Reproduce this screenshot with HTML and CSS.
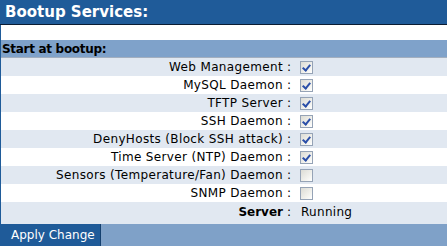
FILE: index.html
```html
<!DOCTYPE html>
<html>
<head>
<meta charset="utf-8">
<link rel="stylesheet" href="styles.css">
</head>
<body>
<div class="page">
  <div class="title">Bootup Services:</div>
  <div class="panel">
    <div class="spacer"></div>
    <div class="section">Start at bootup:</div>
    <div class="rows">
      <div class="row alt"><span class="label">Web Management</span><span class="colon">:</span><span class="cb on"></span></div>
      <div class="row"><span class="label">MySQL Daemon</span><span class="colon">:</span><span class="cb on"></span></div>
      <div class="row alt"><span class="label">TFTP Server</span><span class="colon">:</span><span class="cb on"></span></div>
      <div class="row"><span class="label">SSH Daemon</span><span class="colon">:</span><span class="cb on"></span></div>
      <div class="row alt"><span class="label">DenyHosts (Block SSH attack)</span><span class="colon">:</span><span class="cb on"></span></div>
      <div class="row"><span class="label">Time Server (NTP) Daemon</span><span class="colon">:</span><span class="cb on"></span></div>
      <div class="row alt"><span class="label">Sensors (Temperature/Fan) Daemon</span><span class="colon">:</span><span class="cb"></span></div>
      <div class="row"><span class="label">SNMP Daemon</span><span class="colon">:</span><span class="cb"></span></div>
      <div class="row alt last"><span class="label bold">Server</span><span class="colon">:</span><span class="value">Running</span></div>
    </div>
  </div>
  <div class="footer"><button class="apply">Apply Change</button></div>
</div>
</body>
</html>
```
FILE: styles.css
```css
html, body {
  margin: 0;
  padding: 0;
  background: #ffffff;
}
.page {
  width: 447px;
  font-family: "DejaVu Sans", Verdana, sans-serif;
  font-size: 12px;
  color: #000;
}
.title {
  height: 24px;
  line-height: 24px;
  background: #1f5b99;
  color: #fff;
  font-weight: bold;
  font-size: 15px;
  padding-left: 5px;
  border-bottom: 1px solid #0b1c33;
}
.panel {
  border-left: 1px solid #1f5b99;
}
.spacer {
  height: 15px;
  background: #fff;
}
.section {
  height: 17px;
  line-height: 18px;
  background: #7fa2ca;
  border-bottom: 1px solid #a3afbf;
  font-weight: bold;
  letter-spacing: -0.3px;
  padding-left: 1px;
}
.row {
  display: grid;
  grid-template-columns: 282px 17px auto;
  align-items: center;
  height: 18px;
  background: #fff;
}
.row.alt {
  background: #e1e8f1;
}
.row.last {
  height: 22px;
  align-items: start;
}
.row.last > span {
  line-height: 21px;
}
.label {
  text-align: right;
  white-space: nowrap;
  letter-spacing: 0.35px;
}
.label.bold {
  font-weight: bold;
  letter-spacing: 0;
}
.colon {
  padding-left: 4px;
}
.value {
  padding-left: 1px;
  letter-spacing: 0.3px;
}
.cb {
  display: block;
  width: 11px;
  height: 11px;
  border: 1px solid #95a3b6;
  background: linear-gradient(135deg, #dcdcd5 0%, #f4f4f0 70%, #ffffff 100%);
  position: relative;
}
.cb.on::after {
  content: "";
  position: absolute;
  left: 3px;
  top: 1px;
  width: 3px;
  height: 6px;
  border-right: 2px solid #2b4fa8;
  border-bottom: 2px solid #2b4fa8;
  transform: rotate(40deg);
}
.footer {
  height: 22px;
  background: #7fa1c8;
  display: flex;
}
.apply {
  height: 22px;
  width: 101px;
  margin: 0;
  padding: 0 0 0 11px;
  text-align: left;
  background: #1f5b99;
  color: #fff;
  border: none;
  border-right: 1px solid #14406f;
  font-family: "DejaVu Sans", Verdana, sans-serif;
  font-size: 12px;
  line-height: 22px;
}
```
